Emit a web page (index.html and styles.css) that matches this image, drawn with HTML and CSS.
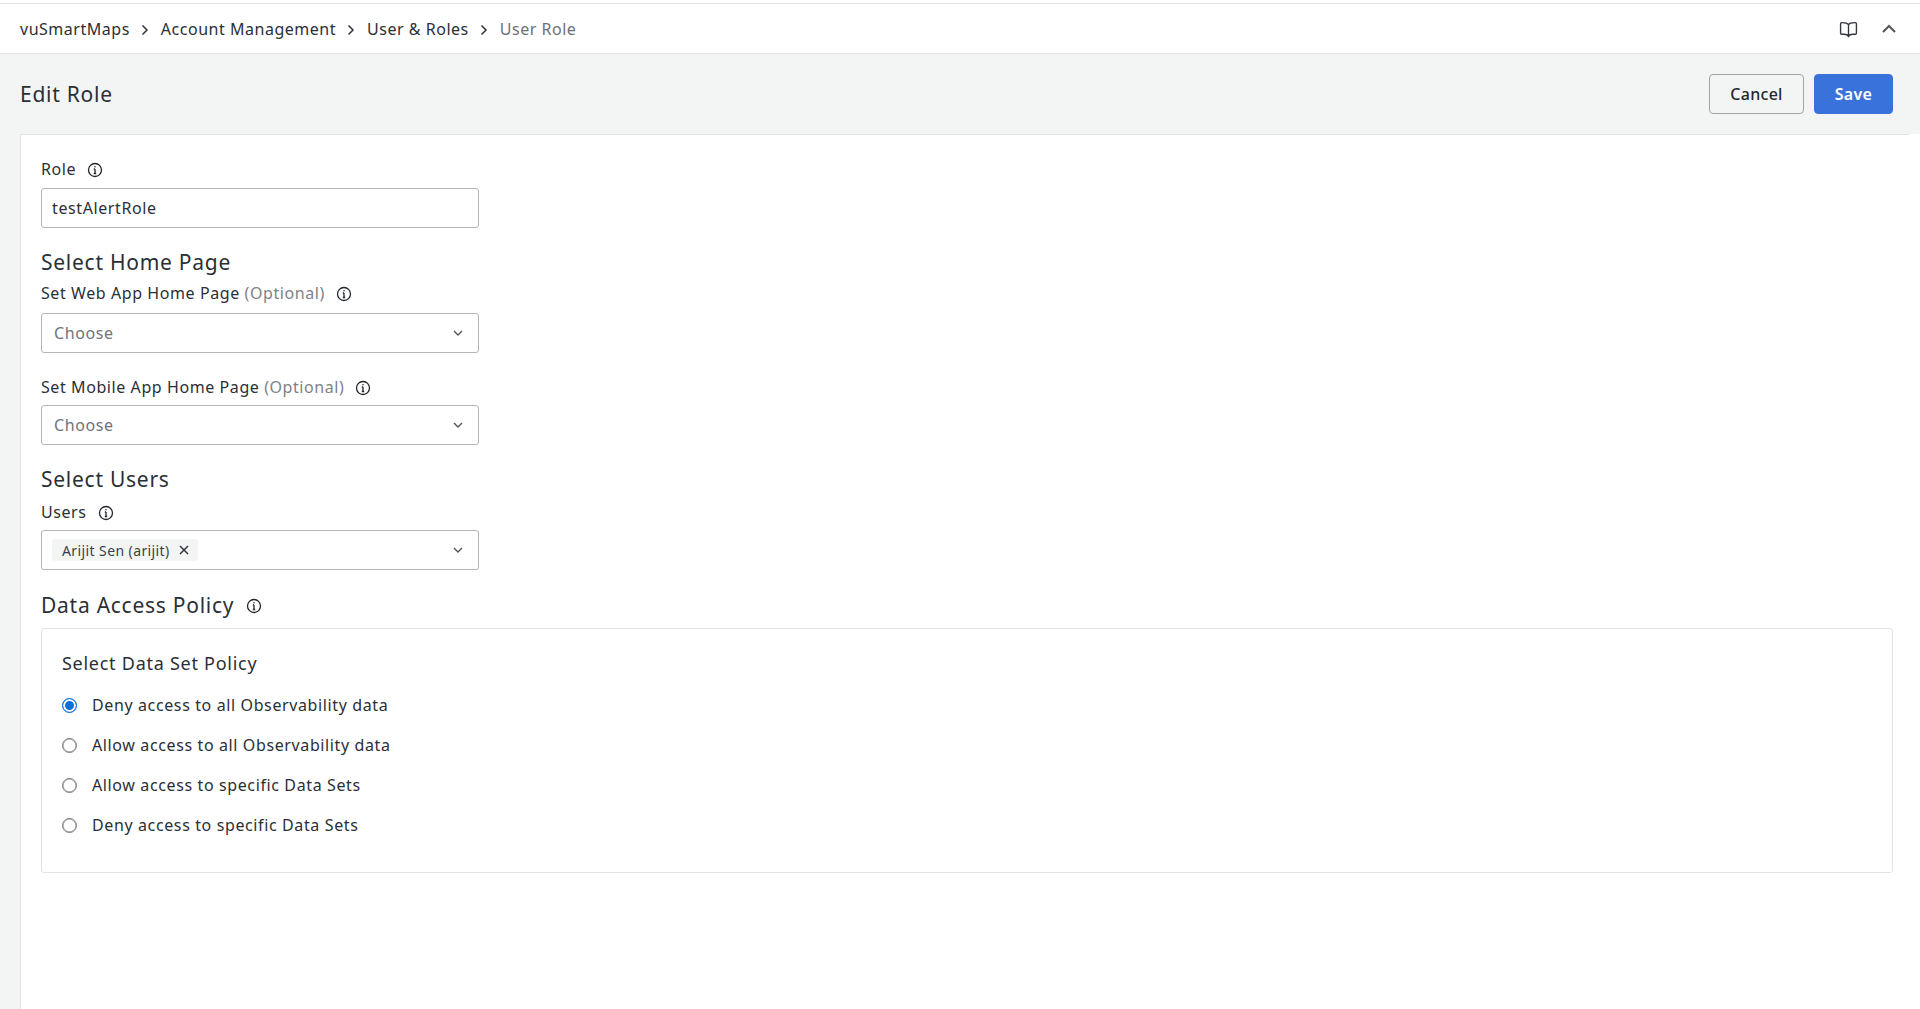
FILE: index.html
```html
<html>
<head lang="en">
    <title>Edit Role</title>
    <link rel="stylesheet" href="styles.css">
</head>

<body>
    <div class="topbar">
        <div class="crumbs">
            <span>vuSmartMaps</span>
            <svg class="crumb-sep" viewBox="0 0 10 12"><path d="M2.500 1.500L7 6l-4.500 4.500"/></svg>
            <span>Account Management</span>
            <svg class="crumb-sep" viewBox="0 0 10 12"><path d="M2.500 1.500L7 6l-4.500 4.500"/></svg>
            <span>User &amp; Roles</span>
            <svg class="crumb-sep" viewBox="0 0 10 12"><path d="M2.500 1.500L7 6l-4.500 4.500"/></svg>
            <span class="crumb-last">User Role</span>
        </div>
        <div class="top-icons">
            <svg class="book" viewBox="0 0 18 18"><path d="M9 4.500C8 3 6 2.500 3 2.500h-.5a1 1 0 0 0-1 1v9a1 1 0 0 0 1 1H5c2 0 3.200.5 4 2 .8-1.500 2-2 4-2h2.500a1 1 0 0 0 1-1v-9a1 1 0 0 0-1-1H15c-3 0-5 .5-6 2zM9 4.500v11"/></svg>
            <svg class="collapse" viewBox="0 0 14 14"><path d="M1 10l6-6 6 6"/></svg>
        </div>
    </div>

    <div class="page-head">
        <h1>Edit Role</h1>
        <div class="actions">
            <button class="btn">Cancel</button>
            <button class="btn btn-save">Save</button>
        </div>
    </div>

    <div class="page-body">
        <div class="card">
            <div class="card-inner">
                <div class="label label-role">
                    <span>Role</span>
                    <svg class="info" viewBox="0 0 16 16"><circle cx="8" cy="8" r="6.500"/><path d="M8 7v4.500M6.800 11.500h2.400M6.800 7H8"/><circle class="dot" cx="8" cy="4.800" r=".8"/></svg>
                </div>
                <div class="field">testAlertRole</div>

                <h2 class="heading-home">Select Home Page</h2>
                <div class="label label-web">
                    <span>Set Web App Home Page <span class="optional">(Optional)</span></span>
                    <svg class="info" viewBox="0 0 16 16"><circle cx="8" cy="8" r="6.500"/><path d="M8 7v4.500M6.800 11.500h2.400M6.800 7H8"/><circle class="dot" cx="8" cy="4.800" r=".8"/></svg>
                </div>
                <div class="field select">
                    <span class="placeholder">Choose</span>
                    <svg class="caret" viewBox="0 0 12 12"><path d="M2 4l4 4 4-4"/></svg>
                </div>

                <div class="label label-mobile">
                    <span>Set Mobile App Home Page <span class="optional">(Optional)</span></span>
                    <svg class="info" viewBox="0 0 16 16"><circle cx="8" cy="8" r="6.500"/><path d="M8 7v4.500M6.800 11.500h2.400M6.800 7H8"/><circle class="dot" cx="8" cy="4.800" r=".8"/></svg>
                </div>
                <div class="field select">
                    <span class="placeholder">Choose</span>
                    <svg class="caret" viewBox="0 0 12 12"><path d="M2 4l4 4 4-4"/></svg>
                </div>

                <h2 class="heading-users">Select Users</h2>
                <div class="label label-users">
                    <span>Users</span>
                    <svg class="info" viewBox="0 0 16 16"><circle cx="8" cy="8" r="6.500"/><path d="M8 7v4.500M6.800 11.500h2.400M6.800 7H8"/><circle class="dot" cx="8" cy="4.800" r=".8"/></svg>
                </div>
                <div class="field select select-users">
                    <span class="chip">
                        <span>Arijit Sen (arijit)</span>
                        <svg class="chip-x" viewBox="0 0 10 10"><path d="M1 1l8 8M9 1l-8 8"/></svg>
                    </span>
                    <svg class="caret" viewBox="0 0 12 12"><path d="M2 4l4 4 4-4"/></svg>
                </div>

                <h2 class="heading-policy">
                    <span>Data Access Policy</span>
                    <svg class="info" viewBox="0 0 16 16"><circle cx="8" cy="8" r="6.500"/><path d="M8 7v4.500M6.800 11.500h2.400M6.800 7H8"/><circle class="dot" cx="8" cy="4.800" r=".8"/></svg>
                </h2>
                <div class="panel">
                    <div class="panel-title">Select Data Set Policy</div>
                    <div class="radio-row"><span class="radio radio-on"></span>Deny access to all Observability data</div>
                    <div class="radio-row"><span class="radio"></span>Allow access to all Observability data</div>
                    <div class="radio-row"><span class="radio"></span>Allow access to specific Data Sets</div>
                    <div class="radio-row"><span class="radio"></span>Deny access to specific Data Sets</div>
                </div>
            </div>
        </div>
    </div>
</body>
</html>
```

FILE: styles.css
```css
* {
    margin: 0;
    box-sizing: border-box;
}
html, body {
    height: 100%;
}
body {
    background-color: white;
    font-family: "Noto Sans", Roboto, sans-serif;
    font-size: 16px;
    color: #2b2f36;
    overflow: hidden;
    display: flex;
    flex-direction: column;
    padding-top: 3px;
}
svg {
    fill: none;
    stroke: currentColor;
    flex-shrink: 0;
}

.topbar {
    height: 51px;
    flex-shrink: 0;
    border-top: 1px solid #e3e3e3;
    border-bottom: 1px solid #e3e3e3;
    display: flex;
    justify-content: space-between;
    align-items: center;
    padding: 0 24px 0 20px;
}
.crumbs {
    display: flex;
    align-items: center;
    letter-spacing: 0.52px;
}
.crumb-sep {
    width: 10px;
    height: 12px;
    margin: 2px 11px 0 10px;
    stroke-width: 1.500;
    color: #333;
}
.crumb-last {
    color: #6c7178;
}
.top-icons {
    display: flex;
    align-items: center;
    gap: 24px;
}
.book {
    width: 19px;
    height: 19px;
    margin-top: 2px;
    stroke-width: 1.300;
    color: #33373d;
}
.collapse {
    width: 14px;
    height: 14px;
    stroke-width: 2;
    color: #555;
}

.page-head {
    height: 80px;
    flex-shrink: 0;
    background-color: #f3f5f5;
    display: flex;
    justify-content: space-between;
    align-items: center;
    padding: 0 27px 0 20px;
}
.page-head h1 {
    font-size: 21px;
    font-weight: 400;
    letter-spacing: 0.75px;
}
.actions {
    display: flex;
    gap: 10px;
}
.btn {
    height: 40px;
    width: 95px;
    border: 1px solid #a3a3a3;
    border-radius: 4px;
    background-color: #f3f5f5;
    font-family: inherit;
    font-size: 16px;
    font-weight: 500;
    letter-spacing: 0.3px;
    color: #23272e;
}
.btn-save {
    width: 79px;
    background-color: #3a72dc;
    border-color: #3a72dc;
    color: white;
    font-weight: 600;
}

.page-body {
    flex: 1;
    padding-left: 20px;
    background-color: #f3f5f5;
}
.card {
    height: 100%;
    background-color: white;
    border-left: 1px solid #e3e3e3;
}
.card-inner {
    margin-right: 11px;
    border-top: 1px solid #e3e3e3;
    padding: 22px 16px 0 20px;
}

.label {
    display: flex;
    align-items: center;
    height: 24px;
    letter-spacing: 0.58px;
}
.label-role {
    margin-bottom: 7px;
}
.label-web {
    margin-top: 4px;
    margin-bottom: 8px;
}
.label-mobile {
    margin-top: 22px;
    margin-bottom: 6px;
}
.label-users {
    margin-top: 6px;
    margin-bottom: 6px;
}
.optional {
    color: #7d8288;
}
.info {
    width: 16px;
    height: 16px;
    margin-left: 11px;
    margin-top: 2px;
    stroke-width: 1.300;
    color: #22262b;
}
.dot {
    fill: currentColor;
    stroke: none;
}

.field {
    width: 438px;
    height: 40px;
    border: 1px solid #b5b5b5;
    border-radius: 3px;
    background-color: white;
    display: flex;
    align-items: center;
    padding: 0 10px;
    letter-spacing: 0.6px;
}
.select {
    justify-content: space-between;
    padding: 0 14px 0 12px;
}
.placeholder {
    color: #6f747b;
}
.caret {
    width: 12px;
    height: 12px;
    stroke-width: 1.400;
    color: #555;
}
.select-users {
    padding-left: 10px;
}
.chip {
    height: 22px;
    padding: 0 9px 0 10px;
    background-color: #f3f5f5;
    border-radius: 3px;
    display: flex;
    align-items: center;
    gap: 9px;
    font-size: 14px;
    letter-spacing: 0.4px;
    color: #3a3f46;
}
.chip-x {
    width: 10px;
    height: 10px;
    stroke-width: 1.500;
    color: #33373d;
}

h2 {
    font-size: 21px;
    font-weight: 400;
    letter-spacing: 0.74px;
    height: 30px;
    line-height: 30px;
}
.heading-home {
    margin-top: 19px;
}
.heading-users {
    margin-top: 19px;
}
.heading-policy {
    margin-top: 20px;
    display: flex;
    align-items: center;
}
.heading-policy .info {
    margin-left: 12px;
}
.panel {
    margin-top: 8px;
    height: 245px;
    border: 1px solid #e3e3e3;
    border-radius: 3px;
    padding: 19px 20px 0 20px;
}
.panel-title {
    font-size: 18px;
    line-height: 30px;
    letter-spacing: 0.73px;
    margin-bottom: 7px;
}
.radio-row {
    display: flex;
    align-items: center;
    height: 40px;
    letter-spacing: 0.62px;
}
.radio {
    width: 15px;
    height: 15px;
    border: 1px solid #7b7b7b;
    box-shadow: inset 0 0 0 .5px #7b7b7b;
    border-radius: 50%;
    margin-right: 15px;
    background-color: white;
}
.radio-on {
    border-color: #0a6fd8;
    background-color: #0a6fd8;
    box-shadow: inset 0 0 0 2px white;
}
```
